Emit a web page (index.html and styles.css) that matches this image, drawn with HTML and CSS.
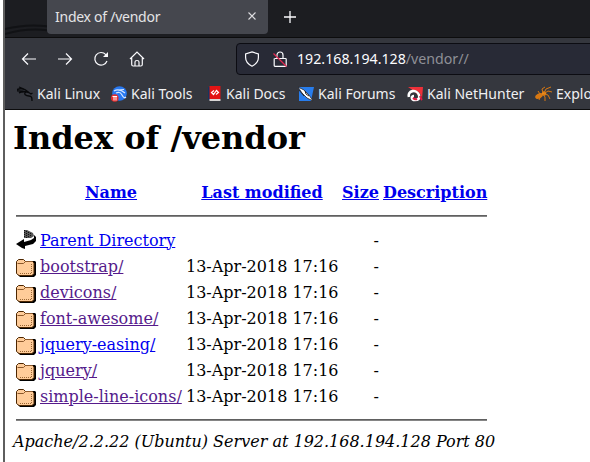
FILE: index.html
```
<!DOCTYPE html>
<html lang="en">
<head>
<meta charset="utf-8">
<title>Index of /vendor</title>
<link rel="stylesheet" href="styles.css">
</head>
<body>
<svg class="defs" width="0" height="0">
  <symbol id="folder" viewBox="0 0 20 22">
    <path d="M2 6h17l1 1v13l-2 2H4l-2-2z" fill="#000"/>
    <path d="M.5 6.500l2-2h5l2 2h7l1.500 1.500v10.500l-2 2h-13l-2.500-2z" fill="#ffcc99" stroke="#4d2600"/>
    <path d="M1.500 8.500h6l2-2h7" fill="none" stroke="#8c592b"/>
    <path d="M4 18.500h11M15.500 9v10" fill="none" stroke="#996633" stroke-dasharray="1 1"/>
  </symbol>
  <symbol id="dragon" viewBox="0 0 16 16">
    <path d="M0 3.500l4-1 4 1 4 3-4-1-3 .5-3 1 3-2-5-.2M2 1l5 2M9 6c-3 2 0 4 3 4s3 2 3 5M11 6l3 2 1.500-1" fill="none" stroke="currentColor" stroke-width="1.300"/>
  </symbol>
</svg>
<div class="window">
  <header class="tabs">
    <svg class="wallpaper" width="46" height="37"><path d="M0 29q24-6 46-2M0 34q25-7 46-3" fill="none" stroke="#111215" stroke-width="2"/></svg>
    <div class="tab"><span>Index of /vendor</span>
      <svg width="10" height="10" viewBox="0 0 10 10"><path d="M1.500 1.500l7 7M8.500 1.500l-7 7" stroke="#dcdcdf" stroke-width="1.100"/></svg></div>
    <svg class="plus" width="12" height="12"><path d="M6 0v12M0 6h12" stroke="#fbfbfe" stroke-width="1.300"/></svg>
  </header>
  <nav class="toolbar">
    <svg width="16" height="16" viewBox="0 0 16 16"><path d="M15 8H1.500M7 2.500L1.500 8 7 13.500"/></svg>
    <svg width="16" height="16" viewBox="0 0 16 16"><path d="M1 8h13.500M9 2.500L14.500 8 9 13.500"/></svg>
    <svg width="16" height="16" viewBox="0 0 16 16"><path d="M14 10A6.300 6.300 0 1 1 12.800 3.600L14 5"/><path d="M15 1v5h-5z" fill="#fbfbfe" stroke="none"/></svg>
    <svg width="16" height="16" viewBox="0 0 16 16"><path d="M1 8l7-7 7 7M2.700 7v6.500q0 1.500 1.500 1.500h7.600q1.500 0 1.500-1.500V7M6 15v-4q0-1.500 2-1.500t2 1.500v4"/></svg>
    <div class="urlbar">
      <svg width="16" height="16" viewBox="0 0 16 16"><path d="M8 .9L14.400 3v3.500c0 4-3 7-6.400 8.700C4.600 13.500 1.600 10.500 1.600 6.500V3z"/></svg>
      <svg width="16" height="16" viewBox="0 0 16 16"><path d="M2.600 7.500h10.800q.8 0 .8.800v6.200q0 .8-.8.800H3q-.8 0-.8-.8V7.500M5 7V4a3 3 0 0 1 6 0v3"/><path d="M1.500 2.500l13 13" class="slash"/></svg>
      <span class="url">192.168.194.128<i>/vendor//</i></span>
    </div>
  </nav>
  <nav class="bookmarks">
    <a class="b1"><svg width="16" height="16" color="#08090b"><use href="#dragon"/></svg><span>Kali Linux</span></a>
    <a class="b2"><svg width="16" height="16" viewBox="0 0 16 16"><circle cx="8.500" cy="7.500" r="7.300" fill="#2878f0"/><path d="M3 5q5-3 11 2M5 7q4-2 6 2t4 2M7 4l6-.5" fill="none" stroke="#d5e6ff" stroke-width="1.200"/><circle cx="3.800" cy="12" r="3.800" fill="#e52e2e"/><path d="M1.500 10.500h4.600M3 10.500v4M5 10.500v4" stroke="#fff" fill="none"/></svg><span>Kali Tools</span></a>
    <a class="b3"><svg width="14" height="16" viewBox="0 0 14 16"><path d="M0 1h2v13H0z" fill="#173461"/><path d="M1.500 0h11v13h-11z" fill="#e31414"/><path d="M1.500 13h11v2h-11z" fill="#d8d5d5"/><path d="M6 4.500l-2.500 2 2 2 3-4 2 2-2.500 2" stroke="#fff" fill="none" stroke-width="1.200"/></svg><span>Kali Docs</span></a>
    <a class="b4"><svg width="16" height="16" viewBox="0 0 16 16"><path d="M1 1h15l-3 14H1z" fill="#287ded"/><path d="M0 1l6 3 5 5 4 6-6-3-5-5z" fill="#fff" stroke="#25272d" stroke-width=".8"/><path d="M1 4l5 6M7 5l1 3 3 2" stroke="#25272d" fill="none"/></svg><span>Kali Forums</span></a>
    <a class="b5"><svg width="16" height="16" viewBox="0 0 16 16"><path d="M1 1h15l-1 12L7 5z" fill="#ee3039"/><path d="M2 11C0 5 9 2 13 9l1 3" fill="none" stroke="#222" stroke-width="1.500"/><path d="M2 11C0 4 10 3 12 9c1 4-1 5-4 5-4 0-4-4-1-4" fill="none" stroke="#fff" stroke-width="2.600"/><path d="M13 10q1 3 2 4M6 12q2 2 4 1" fill="none" stroke="#e61943" stroke-width="2"/></svg><span>Kali NetHunter</span></a>
    <a class="b6"><svg width="17" height="16" viewBox="0 0 17 16"><ellipse cx="4" cy="10" rx="4" ry="2.500" transform="rotate(-25 4 10)" fill="#d87812"/><circle cx="9" cy="7.500" r="2.200" fill="#e88a1c"/><path d="M8 7L7 3l3-2M9 7l2-4 5-2M10 7l3-2 4 1M9 8l4 1 2 4M8 8l2 3v4M6 9l-2 5M5 8L3 5" fill="none" stroke="#d87812" stroke-width="1"/></svg><span>Exploit-DB</span></a>
  </nav>
  <main>
    <h1>Index of /vendor</h1>
    <table>
      <tr><th class="icon"><svg width="20" height="22"></svg></th><th><a>Name</a></th><th><a>Last modified</a></th><th><a>Size</a></th><th><a>Description</a></th></tr>
      <tr><th colspan="5"><hr></th></tr>
      <tr><td class="icon"><svg width="20" height="22" viewBox="0 0 20 22"><path d="M8 1h3l6 3 1 3-3 2H8z" fill="#555"/><path d="M8.500 1v8M10.500 2v7M12.500 3v5M14.500 4v4" stroke="#111" stroke-dasharray="1 1"/><path d="M18 6l2 2v4l-3 3-8 2v3l-3-1-6-4 8-5v3l7-2 3-2z" fill="#000"/></svg></td><td><a>Parent Directory</a></td><td></td><td class="size">-</td><td></td></tr>
      <tr><td class="icon"><svg width="20" height="22"><use href="#folder"/></svg></td><td><a class="seen">bootstrap/</a></td><td class="date">13-Apr-2018 17:16</td><td class="size">-</td><td></td></tr>
      <tr><td class="icon"><svg width="20" height="22"><use href="#folder"/></svg></td><td><a class="seen">devicons/</a></td><td class="date">13-Apr-2018 17:16</td><td class="size">-</td><td></td></tr>
      <tr><td class="icon"><svg width="20" height="22"><use href="#folder"/></svg></td><td><a class="seen">font-awesome/</a></td><td class="date">13-Apr-2018 17:16</td><td class="size">-</td><td></td></tr>
      <tr><td class="icon"><svg width="20" height="22"><use href="#folder"/></svg></td><td><a>jquery-easing/</a></td><td class="date">13-Apr-2018 17:16</td><td class="size">-</td><td></td></tr>
      <tr><td class="icon"><svg width="20" height="22"><use href="#folder"/></svg></td><td><a class="seen">jquery/</a></td><td class="date">13-Apr-2018 17:16</td><td class="size">-</td><td></td></tr>
      <tr><td class="icon"><svg width="20" height="22"><use href="#folder"/></svg></td><td><a class="seen">simple-line-icons/</a></td><td class="date">13-Apr-2018 17:16</td><td class="size">-</td><td></td></tr>
      <tr><th colspan="5"><hr></th></tr>
    </table>
    <address>Apache/2.2.22 (Ubuntu) Server at 192.168.194.128 Port 80</address>
  </main>
</div>
</body>
</html>
```
FILE: styles.css
```
* { box-sizing: border-box; }
body { margin: 0; background: #fff; overflow: hidden; }
svg { display: block; flex: none; }
.defs { position: absolute; }
.window { margin-left: 3px; height: 462px; border-left: 2px solid #5e5e5e; overflow: hidden; font-family: "Noto Sans", sans-serif; }
.tabs { display: flex; height: 38px; background: #1c1d21; border-bottom: 1px solid #0c0c0d; }
.wallpaper { width: 42px; }
.tab { display: flex; justify-content: space-between; align-items: center; width: 221px; height: 34px; padding: 0 11px 2px 8px; border-radius: 0 0 4px 4px; background: #45474e; color: #e4e4e6; font-size: 14px; letter-spacing: -.26px; }
.plus { margin: 11px 0 0 16px; }
.toolbar { display: flex; align-items: center; height: 42px; padding-left: 16px; background: #35373e; }
.toolbar svg { fill: none; stroke: #fbfbfe; stroke-width: 1.2; }
.toolbar > svg { margin-right: 20px; }
.urlbar { display: flex; align-items: center; width: 400px; height: 32px; margin-left: 71px; padding-left: 7px; border: 1px solid #0c0c12; border-radius: 4px; background: #282a36; flex: none; }
.urlbar svg { margin-right: 12px; }
.urlbar .slash { stroke: #e22850; stroke-width: 1.3; }
.url { margin-left: -3px; padding-bottom: 1px; color: #fbfbfe; font-size: 14.2px; }
.url i { font-style: normal; color: #8f9096; }
.bookmarks { display: flex; height: 30px; background: #35373e; border-bottom: 1px solid #0c0c0d; color: #f0f0f2; font-size: 14px; white-space: nowrap; padding: 0 0 2px 12px; }
.bookmarks a { display: flex; align-items: center; gap: 4px; flex: none; }
.bookmarks span { padding-bottom: 1px; }
.b1 { width: 94px; } .b2 { width: 97px; } .b3 { width: 90px; } .b4 { width: 109px; } .b5 { width: 128px; }
main { padding-left: 8px; font: 16px/19px "DejaVu Serif", serif; color: #000; }
h1 { height: 68px; margin: 0; padding-top: 9px; font-size: 32px; line-height: 38px; }
table { width: 477px; border-spacing: 2px; border-collapse: separate; table-layout: fixed; }
th, td { padding: 1px; white-space: nowrap; height: 24px; }
th[colspan] { height: 20px; }
th:nth-child(1).icon { width: 22px; }
th:nth-child(2) { width: 144px; }
th:nth-child(3) { width: 154px; }
th:nth-child(4) { width: 39px; }
td { text-align: left; }
.date, .size { text-align: right; }
table a { color: #00e; text-decoration: underline; }
table a.seen { color: #551a8b; }
hr { margin: 8px 0; height: 2px; border: 0; background: #606060; border-bottom: 1px solid #858585; }
address { font-style: italic; white-space: nowrap; }
```
